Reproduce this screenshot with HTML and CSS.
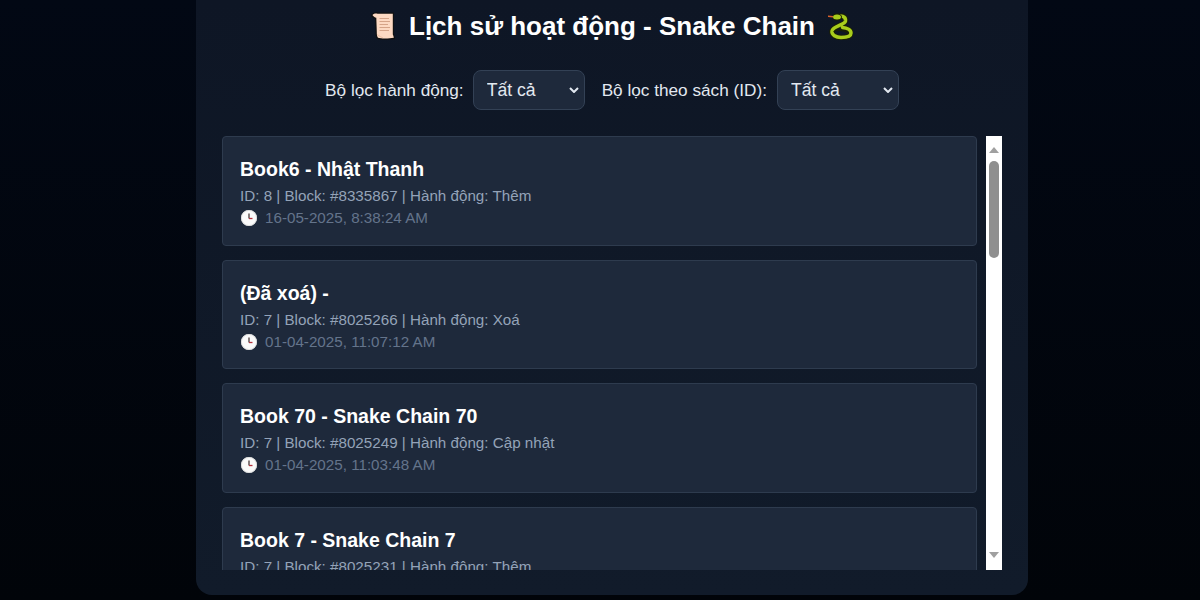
FILE: index.html
```html
<!DOCTYPE html>
<html lang="vi">
<head>
  <meta charset="UTF-8">
  <meta name="viewport" content="width=device-width, initial-scale=1.0">
  <title>Lịch sử hoạt động - Snake Chain</title>
  <link rel="stylesheet" href="styles.css">
</head>
<body>

<svg class="defs" width="0" height="0" aria-hidden="true">
  <symbol id="clock" viewBox="0 0 16 16">
    <circle cx="8" cy="8" r="8" fill="#fafafa"/>
    <circle cx="8" cy="8" r="7.600" fill="none" stroke="#d8d8d8" stroke-width=".8"/>
    <path d="M8 3.500V8.500" stroke="#4a3a3a" stroke-width="1.300" fill="none"/>
    <path d="M8 8.500H11.500" stroke="#b5313c" stroke-width="1.300" fill="none"/>
  </symbol>
</svg>

<div class="container">
  <!-- Tiêu đề -->
  <h1>
    <svg class="emoji-scroll" viewBox="0 0 24 28" aria-hidden="true">
      <path d="M0 3C2 .5 5 0 7 .5H23V22C23.500 23.500 24 25 24 27 19 28 10 28 6 27 4.500 25 4.500 22 4.500 20L4 7C2 6.500 .5 5 0 3Z" fill="#111"/>
      <path d="M1.500 3C3 1.500 5 1.200 6.500 1.800H21.800V22.500C22.300 23.500 22.800 24.800 22.800 25.800 18 26.800 10 26.800 7 25.800 5.800 24 5.800 22 5.800 20L5.300 5.800C3.800 5.500 2.300 4.500 1.500 3Z" fill="#fdd9c2"/>
      <path d="M8.500 6.500H18M8.500 9.500H19M8.500 12.500H17M8.500 15.500H19M8.500 18.500H18" stroke="#d6a488" stroke-width="1" fill="none"/>
      <path d="M6 22.500C9 24.500 11 25.500 12 25.800" stroke="#eebfa3" stroke-width="1" fill="none"/>
    </svg>
    <span>Lịch sử hoạt động - Snake Chain</span>
    <svg class="emoji-snake" viewBox="0 0 26 27" aria-hidden="true">
      <g fill="none" stroke-linecap="round">
        <path d="M9 4C14 2 19 3 18.500 8 18 12 6 13 5 18 4.500 22 9 24.500 14 24.500 19 24.500 24 23.500 24 20 24 17 20 15 15.500 14.500" stroke="#1a2005" stroke-width="5.500"/>
        <path d="M9 4C14 2 19 3 18.500 8 18 12 6 13 5 18 4.500 22 9 24.500 14 24.500 19 24.500 24 23.500 24 20 24 17 20 15 15.500 14.500" stroke="#a8cc1c" stroke-width="3.500"/>
        <path d="M7 18.500C10 16.500 17 17 20.500 20" stroke="#1a2005" stroke-width="1.200"/>
      </g>
      <ellipse cx="10" cy="4" rx="5" ry="3.500" fill="#1a2005"/>
      <ellipse cx="10" cy="4" rx="4" ry="2.500" fill="#a8cc1c"/>
      <path d="M1 2.500 6 3V4.500L1 4Z" fill="#d9622b"/>
    </svg>
  </h1>

  <!-- Bộ lọc -->
  <div class="filters">
    <label for="actionFilter">Bộ lọc hành động:</label>
    <select id="actionFilter" class="action-select">
      <option>Tất cả</option>
      <option>Thêm</option>
      <option>Cập nhật</option>
      <option>Xoá</option>
    </select>
    <label for="bookFilter" class="book-label">Bộ lọc theo sách (ID):</label>
    <select id="bookFilter" class="book-select">
      <option>Tất cả</option>
      <option>8</option>
      <option>7</option>
    </select>
  </div>

  <!-- Danh sách lịch sử -->
  <div class="history">
    <div class="history-list">
      <div class="history-item">
        <h3>Book6 - Nhật Thanh</h3>
        <p class="meta">ID: 8 | Block: #8335867 | Hành động: Thêm</p>
        <p class="time"><svg class="clock"><use href="#clock"/></svg>16-05-2025, 8:38:24 AM</p>
      </div>
      <div class="history-item">
        <h3>(Đã xoá) -</h3>
        <p class="meta">ID: 7 | Block: #8025266 | Hành động: Xoá</p>
        <p class="time"><svg class="clock"><use href="#clock"/></svg>01-04-2025, 11:07:12 AM</p>
      </div>
      <div class="history-item">
        <h3>Book 70 - Snake Chain 70</h3>
        <p class="meta">ID: 7 | Block: #8025249 | Hành động: Cập nhật</p>
        <p class="time"><svg class="clock"><use href="#clock"/></svg>01-04-2025, 11:03:48 AM</p>
      </div>
      <div class="history-item">
        <h3>Book 7 - Snake Chain 7</h3>
        <p class="meta">ID: 7 | Block: #8025231 | Hành động: Thêm</p>
      </div>
    </div>
    <!-- Thanh cuộn -->
    <div class="scrollbar">
      <span class="arrow-up"></span>
      <span class="thumb"></span>
      <span class="arrow-down"></span>
    </div>
  </div>
</div>

</body>
</html>
```

FILE: styles.css
```css
/* Trang chung */
body {
  font-family: "Liberation Sans", Arial, sans-serif;
  background: linear-gradient(180deg, #020814, #010409);
  color: #fff;
  margin: 0;
  height: 600px;
  overflow: hidden;
}
.defs {
  display: none;
}
.container {
  width: 832px;
  height: 595px;
  margin-left: 196px;
  padding: 0 26px 25px;
  box-sizing: border-box;
  background: linear-gradient(180deg, #0e1625, #111b2a);
  border-radius: 0 0 16px 16px;
  display: flex;
  flex-direction: column;
}
h1 {
  font-size: 26px;
  line-height: 30px;
  margin: 11px 0 0;
  font-weight: bold;
  display: flex;
  justify-content: center;
  align-items: center;
  gap: 12px;
}
.emoji-scroll {
  width: 24px;
  height: 28px;
  margin-right: 2px;
  flex: none;
}
.emoji-snake {
  width: 26px;
  height: 27px;
  flex: none;
}

/* Bộ lọc */
.filters {
  display: flex;
  justify-content: center;
  align-items: center;
  margin-top: 29px;
  margin-bottom: 26px;
  font-size: 17.2px;
  color: #e2e8f0;
}
.filters label {
  margin-right: 9px;
}
.filters .book-label {
  margin-right: 10px;
}
.filters select {
  height: 40px;
  padding: 0 10px 0 13px;
  font-family: inherit;
  font-size: 17.6px;
  color: #e2e8f0;
  background-color: #1e293b;
  border: 1px solid #334155;
  border-radius: 8px;
  appearance: none;
  background-image: url("data:image/svg+xml,%3Csvg xmlns='http://www.w3.org/2000/svg' width='10' height='6'%3E%3Cpath d='M1 1l4 4 4-4' fill='none' stroke='%23e2e8f0' stroke-width='2'/%3E%3C/svg%3E");
  background-repeat: no-repeat;
  background-position: right 5px center;
}
.action-select {
  width: 112px;
  margin-right: 17px;
}
.book-select {
  width: 122px;
}

/* Danh sách */
.history {
  flex: 1;
  min-height: 0;
  display: flex;
  gap: 9px;
}
.history-list {
  flex: 1;
  min-width: 0;
  overflow: hidden;
  display: flex;
  flex-direction: column;
  gap: 14px;
}
.history-item {
  flex: none;
  height: 109.5px;
  padding: 20px 17px 0;
  box-sizing: border-box;
  background: #1e293b;
  border: 1px solid #2e3b4e;
  border-radius: 4px;
}
.history-item h3 {
  margin: 0;
  font-size: 19.5px;
  line-height: 24px;
  color: #fff;
}
.history-item p {
  margin: 0;
  font-size: 15.2px;
  line-height: 22px;
}
.history-item .meta {
  margin-top: 4px;
  color: #94a3b8;
}
.time {
  display: flex;
  align-items: center;
  color: #64748b;
}
.clock {
  width: 16px;
  height: 16px;
  margin: 0 8px 0 1px;
  flex: none;
}

/* Thanh cuộn */
.scrollbar {
  width: 16px;
  flex: none;
  background: #fff;
  display: flex;
  flex-direction: column;
  align-items: center;
  padding: 11px 0 12px;
  box-sizing: border-box;
}
.arrow-up,
.arrow-down {
  width: 0;
  height: 0;
  border-left: 5px solid transparent;
  border-right: 5px solid transparent;
}
.arrow-up {
  border-bottom: 6px solid #a0a0a0;
}
.arrow-down {
  border-top: 6px solid #a0a0a0;
  margin-top: auto;
}
.thumb {
  width: 10px;
  height: 97px;
  margin-top: 8px;
  background: #8f8f8f;
  border-radius: 5px;
}
```
